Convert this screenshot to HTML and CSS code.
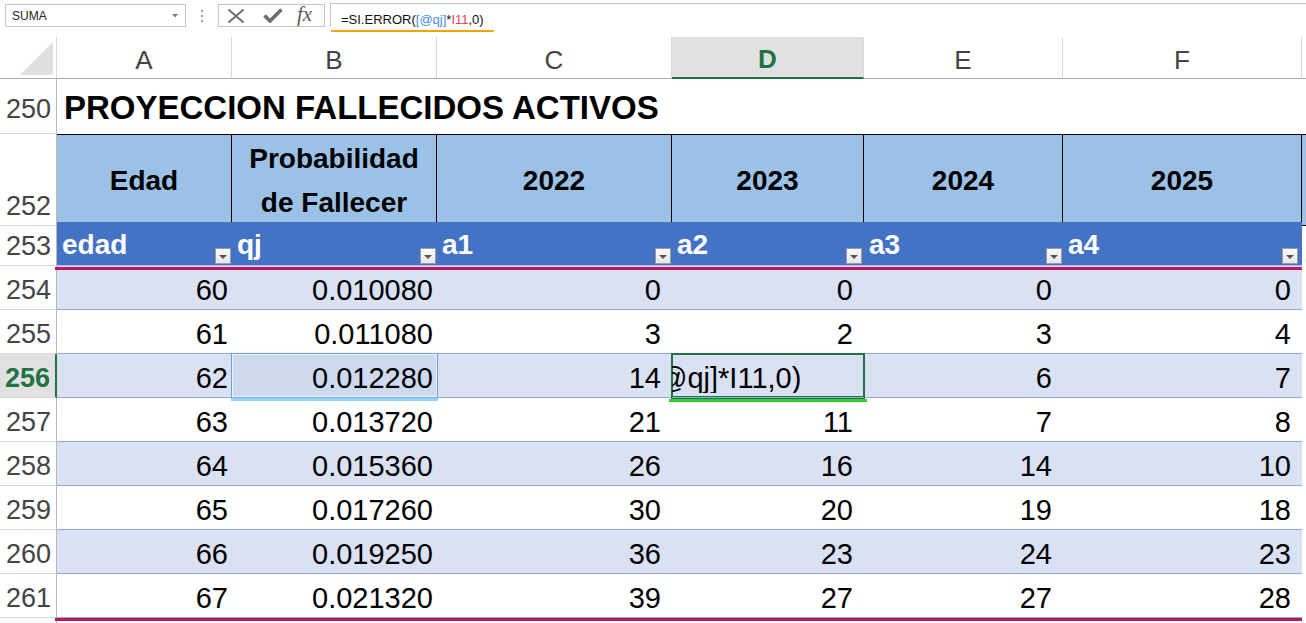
FILE: index.html
```html
<!DOCTYPE html>
<html lang="es">
<head>
<meta charset="utf-8">
<title>Proyeccion fallecidos activos</title>
<link rel="stylesheet" href="styles.css">
</head>
<body>
<div class="fbar">
  <div class="namebox">
    <span>SUMA</span>
    <svg class="dd" width="6" height="4" viewBox="0 0 6 4"><polygon points="0,0 6,0 3,3.5" fill="#7a7a7a"/></svg>
  </div>
  <div class="grip"><i></i><i></i><i></i></div>
  <div class="fbtns">
    <svg class="ic-x" width="18" height="16" viewBox="0 0 18 16"><path d="M1.5 1.5 L16.5 14.5 M16.5 1.5 L1.5 14.5" stroke="#6e6e6e" stroke-width="2" fill="none"/></svg>
    <svg class="ic-ok" width="20" height="15" viewBox="0 0 20 15"><path d="M1.5 7.5 L7 13 L18.5 1.5" stroke="#6e6e6e" stroke-width="3.6" fill="none"/></svg>
    <span class="fx">fx</span>
  </div>
  <div class="formula"><span class="ftext">=SI.ERROR(<span class="ref-b">[@qj]</span>*<span class="ref-r">I11</span>,0)</span></div>
</div>

<div class="sheet">
  <div class="row colhdr">
    <div class="ch corner"><svg width="57" height="41" viewBox="0 0 57 41"><polygon points="53,5 53,38 20,38" fill="#dfdfdf"/></svg></div>
    <div class="ch">A</div>
    <div class="ch">B</div>
    <div class="ch">C</div>
    <div class="ch ch-act">D</div>
    <div class="ch">E</div>
    <div class="ch">F</div>
    <div class="ch ch-end"></div>
  </div>

  <div class="row r250">
    <div class="rh rh-250">250</div>
    <div class="title">PROYECCION FALLECIDOS ACTIVOS</div>
  </div>

  <div class="row r252">
    <div class="rh">252</div>
    <div class="th">Edad</div>
    <div class="th th-2">Probabilidad<br>de Fallecer</div>
    <div class="th">2022</div>
    <div class="th">2023</div>
    <div class="th">2024</div>
    <div class="th">2025</div>
    <div class="th th-end"></div>
  </div>

  <div class="row r253">
    <div class="rh">253</div>
    <div class="tl"><span class="lbl">edad</span><span class="flt"></span></div>
    <div class="tl"><span class="lbl">qj</span><span class="flt"></span></div>
    <div class="tl"><span class="lbl">a1</span><span class="flt"></span></div>
    <div class="tl"><span class="lbl">a2</span><span class="flt flt-d"></span></div>
    <div class="tl"><span class="lbl">a3</span><span class="flt"></span></div>
    <div class="tl"><span class="lbl">a4</span><span class="flt flt-f"></span></div>
    <div class="tl-end"></div>
  </div>

  <div class="tbody">
    <div class="row dr band">
      <div class="rh">254</div>
      <div class="c">60</div><div class="c">0.010080</div><div class="c w">0</div><div class="c w">0</div><div class="c w">0</div><div class="c w">0</div><div class="c-end"></div>
    </div>
    <div class="row dr">
      <div class="rh">255</div>
      <div class="c">61</div><div class="c">0.011080</div><div class="c w">3</div><div class="c w">2</div><div class="c w">3</div><div class="c w">4</div><div class="c-end"></div>
    </div>
    <div class="row dr band">
      <div class="rh rh-act">256</div>
      <div class="c">62</div><div class="c c-ref">0.012280</div><div class="c w">14</div><div class="c c-edit"><span class="edit">@qj]*I11,0)</span></div><div class="c w">6</div><div class="c w">7</div><div class="c-end"></div>
    </div>
    <div class="row dr">
      <div class="rh">257</div>
      <div class="c">63</div><div class="c">0.013720</div><div class="c w">21</div><div class="c w">11</div><div class="c w">7</div><div class="c w">8</div><div class="c-end"></div>
    </div>
    <div class="row dr band">
      <div class="rh">258</div>
      <div class="c">64</div><div class="c">0.015360</div><div class="c w">26</div><div class="c w">16</div><div class="c w">14</div><div class="c w">10</div><div class="c-end"></div>
    </div>
    <div class="row dr">
      <div class="rh">259</div>
      <div class="c">65</div><div class="c">0.017260</div><div class="c w">30</div><div class="c w">20</div><div class="c w">19</div><div class="c w">18</div><div class="c-end"></div>
    </div>
    <div class="row dr band">
      <div class="rh">260</div>
      <div class="c">66</div><div class="c">0.019250</div><div class="c w">36</div><div class="c w">23</div><div class="c w">24</div><div class="c w">23</div><div class="c-end"></div>
    </div>
    <div class="row dr">
      <div class="rh">261</div>
      <div class="c">67</div><div class="c">0.021320</div><div class="c w">39</div><div class="c w">27</div><div class="c w">27</div><div class="c w">28</div><div class="c-end"></div>
    </div>
  </div>

  <div class="row tail">
    <div class="rh"></div>
  </div>
</div>
</body>
</html>
```
FILE: styles.css
```css
* { box-sizing: border-box; margin: 0; padding: 0; }
html, body { width: 1306px; height: 623px; overflow: hidden; background: #fff; }
body { font-family: "Liberation Sans", Arial, sans-serif; color: #000; }

/* ---------- formula bar ---------- */
.fbar { height: 37px; display: flex; align-items: flex-start; padding-top: 4px; }
.namebox {
  margin-left: 5px; width: 181px; height: 23px;
  border: 1px solid #c6c6c6;
  display: flex; align-items: center; justify-content: space-between;
  padding: 0 7px 0 6px;
  font-size: 12px; color: #222;
}
.grip { width: 2px; margin: 6px 15px 0 15px; display: flex; flex-direction: column; gap: 3px; }
.grip i { display: block; width: 2px; height: 2px; background: #9a9a9a; }
.fbtns {
  width: 107px; height: 23px; border: 1px solid #c6c6c6;
  display: flex; align-items: center; padding-left: 8px;
}
.ic-ok { margin-left: 18px; }
.fx {
  margin-left: 14px; font-family: "Liberation Serif", serif; font-style: italic;
  font-size: 21px; color: #5a5a5a; line-height: 1; margin-top: -2px;
}
.formula {
  flex: 1; margin-left: 5px; height: 24px; margin-top: -1px;
  border-top: 1px solid #c6c6c6; border-left: 1px solid #c6c6c6;
}
.ftext {
  display: inline-block; margin-top: 6px; padding: 0 10px;
  font-size: 13px; line-height: 20px; color: #111;
  border-bottom: 2px solid #f5a300; border-radius: 1px;
}
.ref-b { color: #4a8be6; }
.ref-r { color: #e4405f; }

/* ---------- sheet grid ---------- */
.row { display: grid; grid-template-columns: 57px 175px 205px 235px 192px 199px 239px 4px; }

.colhdr { height: 42px; }
.ch {
  border-right: 1px solid #dadada; border-bottom: 1px solid #ababab;
  display: flex; justify-content: center; align-items: flex-end;
  padding-bottom: 5px; font-size: 26px; line-height: 1; color: #444;
}
.corner { padding: 0; display: block; }
.corner svg { display: block; }
.ch-act { background: #e1e1e1; color: #217346; font-weight: bold; border-bottom: 2px solid #217346; }
.ch-end { border-right: none; }

.rh {
  border-right: 1px solid #b8b8b8; border-bottom: 1px solid #dadada;
  display: flex; justify-content: flex-end; align-items: flex-end;
  padding: 0 5px 5px 0; font-size: 27px; line-height: 1; color: #444;
}
.rh-250 { padding-bottom: 10px; }
.rh-act { background: #e1e1e1; color: #217346; font-weight: bold; border-right: 2px solid #217346; }

.r250 { height: 55px; }
.title {
  grid-column: span 7;
  display: flex; align-items: flex-end;
  padding: 0 0 10px 7px;
  font-size: 33px; font-weight: bold; line-height: 1; white-space: nowrap;
}

.r252 { height: 88px; }
.th {
  background: #9bc2e6;
  border-top: 1px solid #000; border-bottom: 1px solid #000; border-right: 1px solid #000;
  display: flex; align-items: center; justify-content: center; text-align: center;
  font-size: 28px; font-weight: bold; line-height: 44px; padding-top: 2px;
}
.th-end { border-right: none; }

.r253 { height: 44px; }
.tl {
  background: #4472c4; color: #fff; border-bottom: 1px solid #a8bde5;
  display: flex; justify-content: space-between; align-items: flex-end;
  padding-left: 5px;
  font-size: 28px; font-weight: bold; line-height: 1;
}
.lbl { margin-bottom: 6px; }
.flt {
  position: relative;
  width: 16px; height: 16px; margin: 0 1px 1px 0;
  border: 1px solid #9c9c9c;
  background: linear-gradient(#fbfbfb, #e6e6e6);
}
.flt::after {
  content: ""; position: absolute; left: 3px; top: 6px;
  border-left: 4px solid transparent; border-right: 4px solid transparent;
  border-top: 4px solid #555;
}
.flt-d { margin-right: 2px; }
.flt-f { margin-right: 4px; }

/* ---------- data ---------- */
.tbody { position: relative; }
.tbody::before, .tbody::after {
  content: ""; position: absolute; left: 55px; width: 1247px; height: 3px; background: #b9185f;
}
.tbody::before { top: 1px; }
.tbody::after { bottom: -3px; }

.dr { height: 44px; }
.c {
  border-bottom: 1px solid #8eaadb;
  display: flex; justify-content: flex-end; align-items: flex-end;
  padding: 0 4px 4px 0;
  font-size: 29px; line-height: 1; white-space: nowrap;
}
.c.w { padding-right: 11px; }
.band .c { background: #d9e1f2; }

.c-ref {
  position: relative; z-index: 1;
  background: #cdd9ef !important;
  box-shadow: 0 0 0 1px #6d9eeb, inset 0 0 0 1px #eef2fb;
}
.c-ref::after {
  content: ""; position: absolute; left: -1px; right: -1px; bottom: -4px; height: 3px; background: #90d2fd;
}
.c-edit {
  position: relative; z-index: 2;
  justify-content: flex-start;
  padding: 0 0 4px 0;
  box-shadow: 0 0 0 1px #217346, inset 0 0 0 1px #217346;
}
.c-edit .edit { display: block; width: 100%; overflow: hidden; text-indent: -16px; padding-left: 2px; }
.c-edit::after {
  content: ""; position: absolute; left: -3px; right: -3px; bottom: -5px; height: 3px; background: #2ece2a;
}

.tail { height: 5px; }
.tail .rh { border-bottom: none; }
```
